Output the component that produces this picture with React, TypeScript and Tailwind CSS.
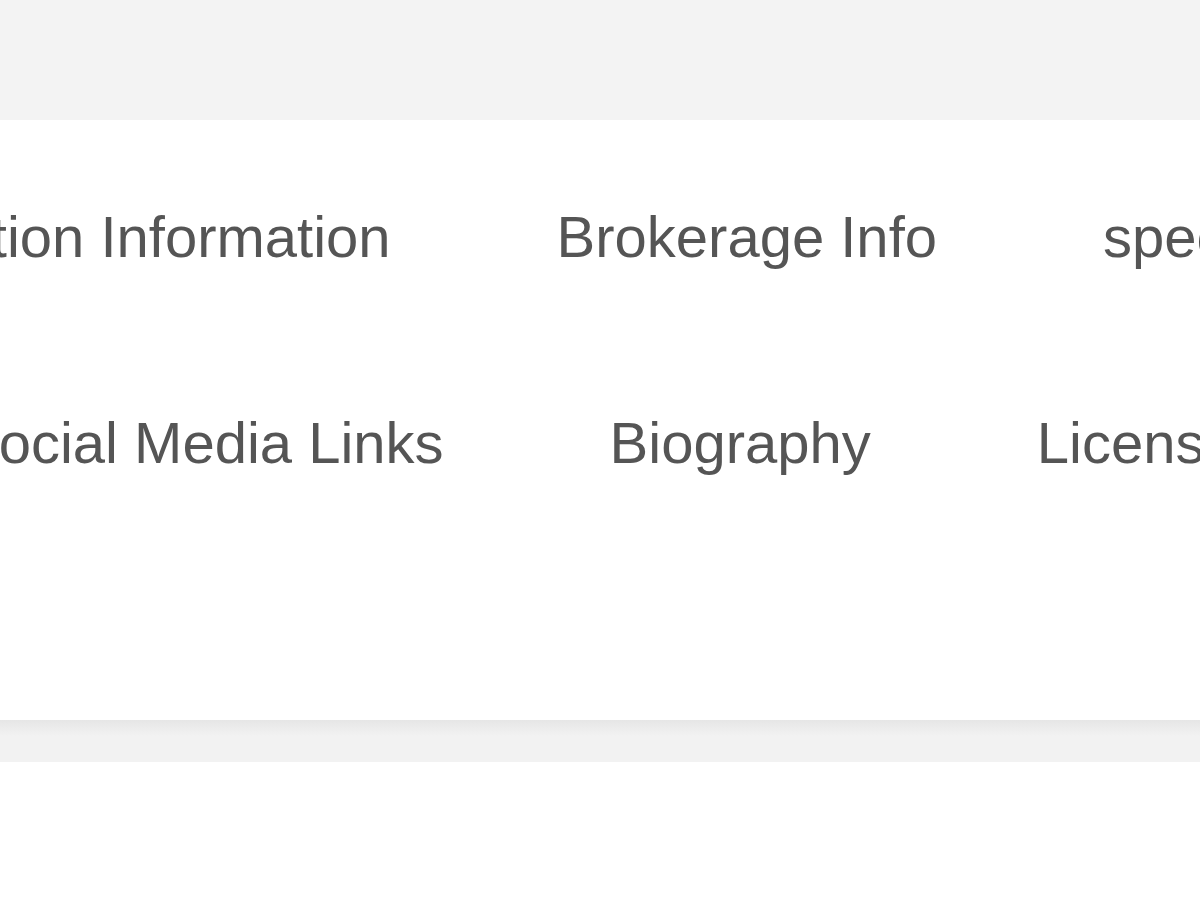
import * as React from "react";

const rowOne = ["Location Information", "Brokerage Info", "specialties"];
const rowTwo = ["Social Media Links", "Biography", "License Information"];

export default function App() {
  return (
    <div
      className="min-h-[900px] w-full overflow-hidden bg-white"
      style={{ fontFamily: '"Liberation Sans", Arial, sans-serif' }}
    >
      {/* Top band */}
      <div className="h-[120px] bg-[#f3f3f3]" />

      {/* Card with section links */}
      <div className="h-[600px] overflow-hidden bg-white text-[58px] leading-none text-[#555]">
        <div className="mt-[88px] ml-[-135px] flex gap-[166px] whitespace-nowrap">
          {rowOne.map((label) => (
            <span key={label}>{label}</span>
          ))}
        </div>
        <div className="mt-[148px] ml-[-40px] flex gap-[166px] whitespace-nowrap">
          {rowTwo.map((label) => (
            <span key={label}>{label}</span>
          ))}
        </div>
      </div>

      {/* Bottom bar */}
      <div className="h-[42px] bg-[linear-gradient(to_bottom,#e6e6e6,#f2f2f2_16px)]" />
    </div>
  );
}
